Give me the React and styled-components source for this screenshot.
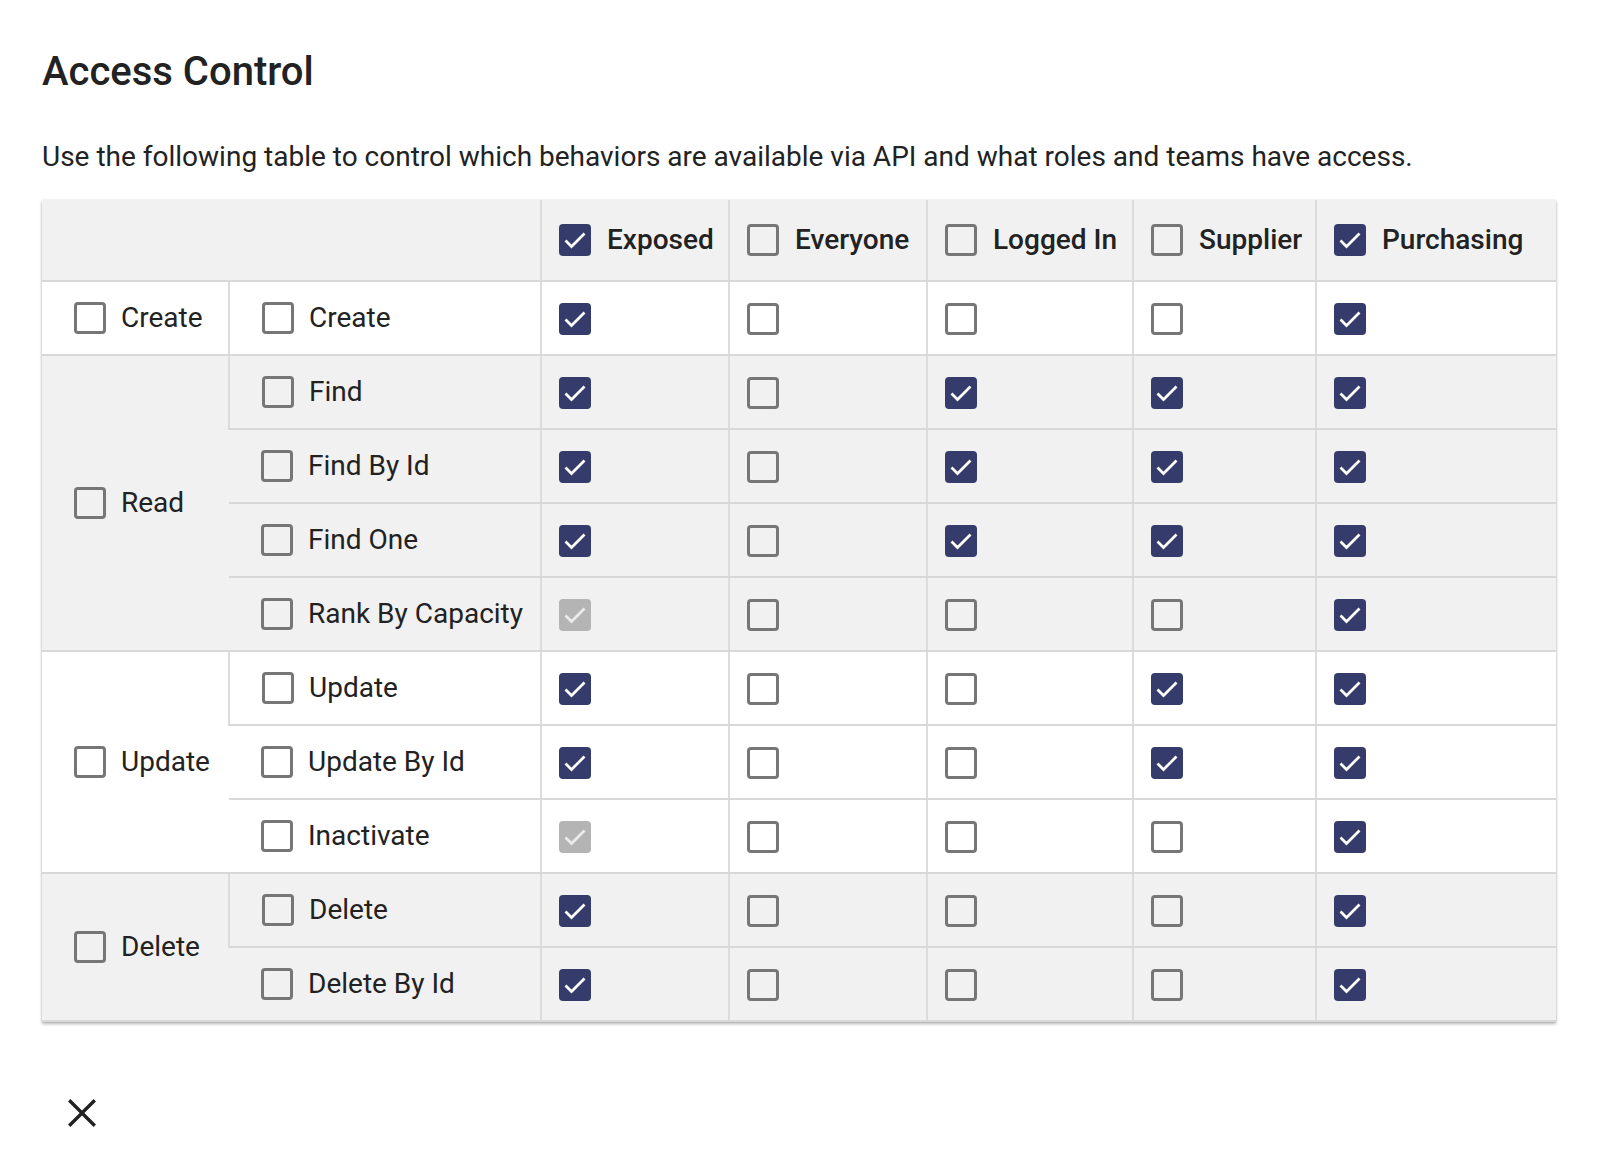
import React from 'react';
import styled, { createGlobalStyle } from 'styled-components';

const GlobalStyle = createGlobalStyle`
  html, body {
    margin: 0;
    padding: 0;
    background: #ffffff;
    font-family: Roboto, "Noto Sans", "Liberation Sans", sans-serif;
    color: #222222;
  }
`;

const ROLES = [
  { name: 'Exposed', checked: true },
  { name: 'Everyone', checked: false },
  { name: 'Logged In', checked: false },
  { name: 'Supplier', checked: false },
  { name: 'Purchasing', checked: true },
];

// 1 = checked, 0 = empty, 2 = checked but disabled
const GROUPS = [
  {
    name: 'Create',
    shade: false,
    ops: [{ name: 'Create', access: [1, 0, 0, 0, 1] }],
  },
  {
    name: 'Read',
    shade: true,
    ops: [
      { name: 'Find', access: [1, 0, 1, 1, 1] },
      { name: 'Find By Id', access: [1, 0, 1, 1, 1] },
      { name: 'Find One', access: [1, 0, 1, 1, 1] },
      { name: 'Rank By Capacity', access: [2, 0, 0, 0, 1] },
    ],
  },
  {
    name: 'Update',
    shade: false,
    ops: [
      { name: 'Update', access: [1, 0, 0, 1, 1] },
      { name: 'Update By Id', access: [1, 0, 0, 1, 1] },
      { name: 'Inactivate', access: [2, 0, 0, 0, 1] },
    ],
  },
  {
    name: 'Delete',
    shade: true,
    ops: [
      { name: 'Delete', access: [1, 0, 0, 0, 1] },
      { name: 'Delete By Id', access: [1, 0, 0, 0, 1] },
    ],
  },
];

const COLUMN_WIDTHS = [187, 312, 188, 198, 206, 183, 240];

function Checkbox({ state }) {
  return (
    <Box state={state}>
      {state > 0 && (
        <svg width="32" height="32" viewBox="0 0 32 32" fill="none">
          <polyline
            points="6.5,16.5 12.5,22.5 25.5,9.5"
            stroke={state === 2 ? '#ececec' : '#ffffff'}
            strokeWidth="2.7"
          />
        </svg>
      )}
    </Box>
  );
}

function CloseIcon() {
  return (
    <svg width="28" height="28" viewBox="0 0 28 28">
      <path
        d="M28 2.4 25.6 0 14 11.6 2.4 0 0 2.4 11.6 14 0 25.6 2.4 28 14 16.4 25.6 28 28 25.6 16.4 14z"
        fill="#222222"
      />
    </svg>
  );
}

export default function App() {
  return (
    <Page>
      <GlobalStyle />
      <Title>Access Control</Title>
      <Description>
        Use the following table to control which behaviors are available via API and what roles and teams have access.
      </Description>

      <Paper>
        <Table>
          <colgroup>
            {COLUMN_WIDTHS.map((w, i) => (
              <col key={i} style={{ width: w }} />
            ))}
          </colgroup>
          <thead>
            <HeadRow>
              <Cell colSpan={2} />
              {ROLES.map((role) => (
                <Cell key={role.name}>
                  <Label>
                    <Checkbox state={role.checked ? 1 : 0} />
                    <HeadText>{role.name}</HeadText>
                  </Label>
                </Cell>
              ))}
            </HeadRow>
          </thead>
          <tbody>
            {GROUPS.map((group) =>
              group.ops.map((op, idx) => (
                <BodyRow key={group.name + op.name} shade={group.shade}>
                  {idx === 0 && (
                    <LabelCell rowSpan={group.ops.length}>
                      <Label>
                        <Checkbox state={0} />
                        <span>{group.name}</span>
                      </Label>
                    </LabelCell>
                  )}
                  <LabelCell>
                    <Label>
                      <Checkbox state={0} />
                      <span>{op.name}</span>
                    </Label>
                  </LabelCell>
                  {op.access.map((a, i) => (
                    <Cell key={i}>
                      <Checkbox state={a} />
                    </Cell>
                  ))}
                </BodyRow>
              ))
            )}
          </tbody>
        </Table>
      </Paper>

      <CloseButton aria-label="close">
        <CloseIcon />
      </CloseButton>
    </Page>
  );
}

const Page = styled.div`
  padding: 47px 44px 0 42px;
  min-height: 1170px;
  box-sizing: border-box;
`;

const Title = styled.h1`
  margin: 0;
  font-size: 40px;
  line-height: 50px;
  font-weight: 500;
  color: #222222;
`;

const Description = styled.p`
  margin: 39px 0 22px;
  font-size: 28px;
  line-height: 42px;
  font-weight: 400;
  color: #222222;
`;

const Paper = styled.div`
  width: 1514px;
  background: #ffffff;
  box-shadow: 0 2px 3px rgba(0, 0, 0, 0.28), 0 0 2px rgba(0, 0, 0, 0.12);
`;

const Table = styled.table`
  width: 1514px;
  table-layout: fixed;
  border-collapse: collapse;
  font-size: 28px;
  color: #222222;
`;

const HeadRow = styled.tr`
  height: 81px;
  background: #f1f1f1;
`;

const BodyRow = styled.tr`
  height: 74px;
  background: ${(props) => (props.shade ? '#f1f1f1' : '#ffffff')};
`;

const Cell = styled.td`
  padding: 0 0 0 17px;
  border-bottom: 2px solid #d8d8d8;
  border-left: 2px solid #dcdcdc;
  vertical-align: middle;
  white-space: nowrap;

  &:first-child {
    border-left: none;
  }
`;

const LabelCell = styled(Cell)`
  padding-left: 32px;
`;

const Label = styled.label`
  display: flex;
  align-items: center;
  gap: 15px;
  line-height: 32px;
`;

const HeadText = styled.span`
  font-weight: 500;
  padding-left: 1px;
`;

const Box = styled.span`
  flex: none;
  display: inline-flex;
  width: 32px;
  height: 32px;
  box-sizing: border-box;
  border-radius: 4px;
  vertical-align: middle;
  border: ${(props) => (props.state === 0 ? '3px solid #767676' : 'none')};
  background: ${(props) =>
    props.state === 1 ? '#353b6b' : props.state === 2 ? '#b4b4b4' : 'transparent'};

  svg {
    display: block;
  }
`;

const CloseButton = styled.button`
  display: block;
  margin: 77px 0 0 26px;
  padding: 0;
  width: 28px;
  height: 28px;
  border: none;
  background: none;
  cursor: pointer;

  svg {
    display: block;
  }
`;
